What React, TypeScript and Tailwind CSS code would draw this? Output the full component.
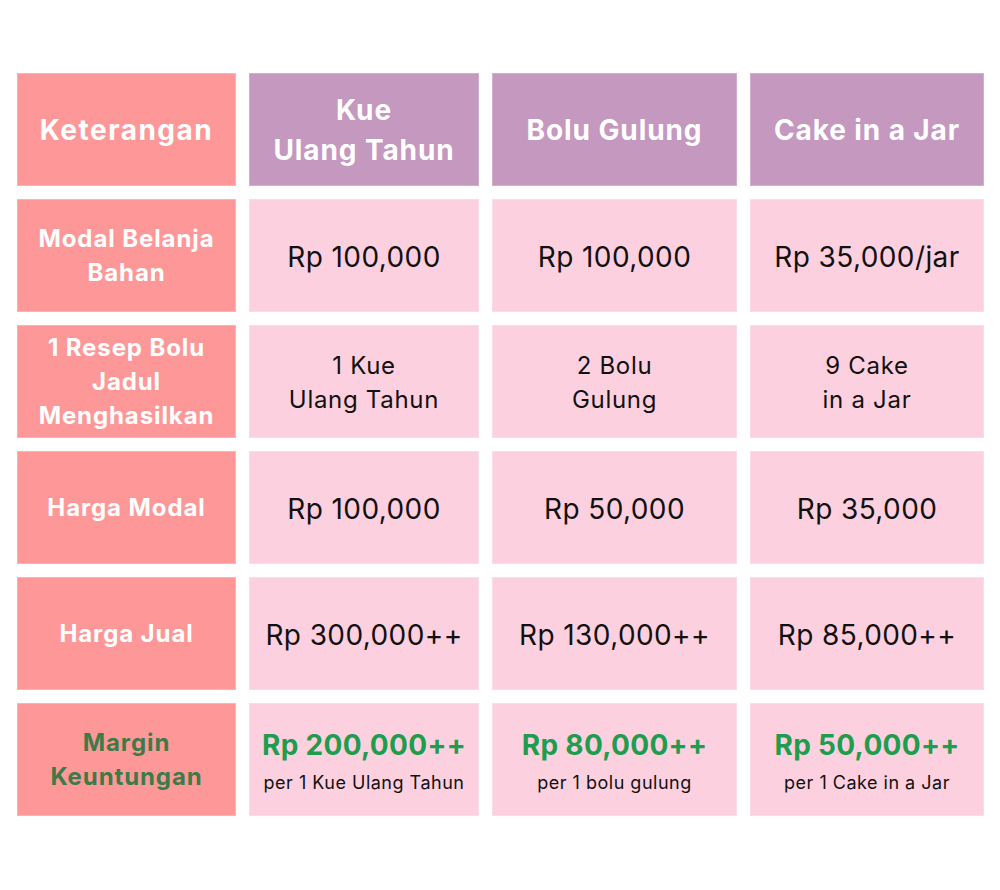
const font = { fontFamily: '"Inter", "Open Sans", sans-serif' };

function Label({ children, green }: { children: React.ReactNode; green?: boolean }) {
  return (
    <div className="bg-[#fe9898] border border-[#ffb0b0] flex items-center justify-center text-center px-1">
      <span
        className={`font-bold text-[24px] leading-[34px] tracking-[0.9px] ${
          green ? "text-[#3c7b47]" : "text-white"
        }`}
      >
        {children}
      </span>
    </div>
  );
}

function Head({ children }: { children: React.ReactNode }) {
  return (
    <div className="bg-[#c598bf] border border-[#d4aed0] flex items-center justify-center text-center">
      <span className="font-bold text-[28px] leading-[40px] text-white tracking-[0.9px]">{children}</span>
    </div>
  );
}

function Cell({ children, small }: { children: React.ReactNode; small?: boolean }) {
  return (
    <div className="bg-[#fdd0df] border border-[#fddbe6] flex items-center justify-center text-center pt-[2px]">
      <span
        className={`text-[#111] ${
          small ? "text-[24px] leading-[34px] tracking-[0.7px]" : "text-[28px] leading-[36px] tracking-[0.4px]"
        }`}
      >
        {children}
      </span>
    </div>
  );
}

function Margin({ amount, note }: { amount: string; note: string }) {
  return (
    <div className="bg-[#fdd0df] border border-[#fddbe6] flex flex-col items-center justify-center text-center pt-1">
      <span className="font-bold text-[28px] leading-[36px] tracking-[0.3px] text-[#1f9d4e]">{amount}</span>
      <span className="text-[18px] leading-[28px] tracking-[0.5px] text-[#111] mt-[6px]">{note}</span>
    </div>
  );
}

export default function App() {
  return (
    <div className="w-[1000px] h-[890px] bg-white pt-[73px] pl-[17px]" style={font}>
      <div className="grid grid-cols-[219px_230px_245px_234px] auto-rows-[113px] gap-x-[13px] gap-y-[13px]">
        <Label>
          <span className="text-[28px] tracking-[1.5px] leading-[40px]">Keterangan</span>
        </Label>
        <Head>
          Kue
          <br />
          Ulang Tahun
        </Head>
        <Head>Bolu Gulung</Head>
        <Head>Cake in a Jar</Head>

        <Label>
          Modal Belanja
          <br />
          Bahan
        </Label>
        <Cell>Rp 100,000</Cell>
        <Cell>Rp 100,000</Cell>
        <Cell>Rp 35,000/jar</Cell>

        <Label>
          1 Resep Bolu
          <br />
          Jadul
          <br />
          Menghasilkan
        </Label>
        <Cell small>
          1 Kue
          <br />
          Ulang Tahun
        </Cell>
        <Cell small>
          2 Bolu
          <br />
          Gulung
        </Cell>
        <Cell small>
          9 Cake
          <br />
          in a Jar
        </Cell>

        <Label>Harga Modal</Label>
        <Cell>Rp 100,000</Cell>
        <Cell>Rp 50,000</Cell>
        <Cell>Rp 35,000</Cell>

        <Label>Harga Jual</Label>
        <Cell>Rp 300,000++</Cell>
        <Cell>Rp 130,000++</Cell>
        <Cell>Rp 85,000++</Cell>

        <Label green>
          Margin
          <br />
          Keuntungan
        </Label>
        <Margin amount="Rp 200,000++" note="per 1 Kue Ulang Tahun" />
        <Margin amount="Rp 80,000++" note="per 1 bolu gulung" />
        <Margin amount="Rp 50,000++" note="per 1 Cake in a Jar" />
      </div>
    </div>
  );
}
